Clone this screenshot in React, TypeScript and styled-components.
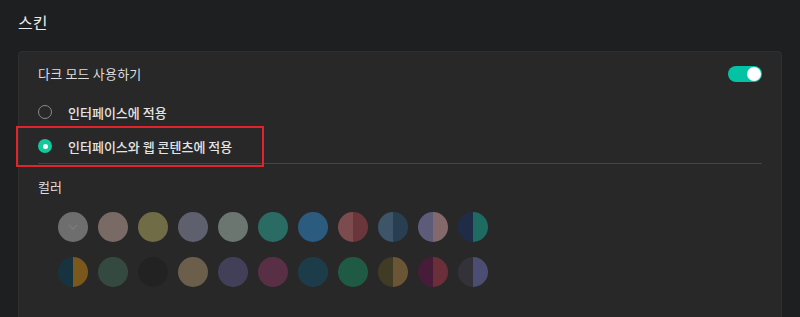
import React from 'react'
import styled, { createGlobalStyle } from 'styled-components'

const GlobalStyle = createGlobalStyle`
  html, body {
    margin: 0;
    padding: 0;
    background: #1e1f21;
  }
  body {
    font-family: 'Noto Sans CJK KR', 'Noto Sans', sans-serif;
    color: #e2e2e2;
  }
`

type Swatch = [string, string?]

const swatchRows: Swatch[][] = [
  [
    ['#6e6e6e'],
    ['#7a6a66'],
    ['#6f6c46'],
    ['#5e616d'],
    ['#6b7670'],
    ['#2a6c63'],
    ['#2c5b80'],
    ['#7b4b4e', '#6a363c'],
    ['#3e5469', '#283f52'],
    ['#5c5c7a', '#84696c'],
    ['#1f2c48', '#1e6b62'],
  ],
  [
    ['#183340', '#7a581c'],
    ['#344a41'],
    ['#222222'],
    ['#6b5f4c'],
    ['#423f58'],
    ['#582f44'],
    ['#1d3c4a'],
    ['#1e5a44'],
    ['#403b24', '#6a5535'],
    ['#461c38', '#6b2f3a'],
    ['#323238', '#4b4e72'],
  ],
]

const App: React.FC = () => {
  return (
    <>
      <GlobalStyle />
      <Page>
        <Title>스킨</Title>
        <Card>
          <SettingRow>
            <Label>다크 모드 사용하기</Label>
            <Toggle $on>
              <Knob />
            </Toggle>
          </SettingRow>
          <RadioRow>
            <Radio />
            <RadioLabel>인터페이스에 적용</RadioLabel>
          </RadioRow>
          <RadioRow>
            <Radio $checked />
            <RadioLabel>인터페이스와 웹 콘텐츠에 적용</RadioLabel>
            <Highlight />
          </RadioRow>
          <Divider />
          <SectionLabel>컬러</SectionLabel>
          <SwatchGrid>
            {swatchRows.flat().map(([a, b], i) => (
              <Dot key={i} $a={a} $b={b ?? a}>
                {i === 0 && (
                  <svg width="10" height="6" viewBox="0 0 10 6">
                    <path d="M1 1l4 4 4-4" fill="none" stroke="#7c7c7c" strokeWidth="1.3" />
                  </svg>
                )}
              </Dot>
            ))}
          </SwatchGrid>
        </Card>
      </Page>
    </>
  )
}

const Page = styled.div`
  padding: 11px 18px 0;
`

const Title = styled.div`
  font-size: 16px;
  line-height: 22px;
  color: #ececec;
  margin-bottom: 18px;
`

const Card = styled.div`
  background: #282828;
  border: 1px solid #2f2f2f;
  border-bottom: none;
  border-radius: 4px 4px 0 0;
  padding: 0 19px 40px;
`

const SettingRow = styled.div`
  height: 43px;
  display: flex;
  align-items: center;
  justify-content: space-between;
`

const Label = styled.div`
  font-size: 13px;
  letter-spacing: 0.2px;
  color: #dedede;
`

const Toggle = styled.div<{ $on?: boolean }>`
  width: 34px;
  height: 16px;
  border-radius: 8px;
  background: ${(p) => (p.$on ? '#04c3a4' : '#555')};
  display: flex;
  align-items: center;
  justify-content: ${(p) => (p.$on ? 'flex-end' : 'flex-start')};
  padding: 0 1px;
  box-sizing: border-box;
`

const Knob = styled.div`
  width: 14px;
  height: 14px;
  border-radius: 50%;
  background: #ffffff;
`

const RadioRow = styled.div`
  position: relative;
  height: 34px;
  display: flex;
  align-items: center;
  gap: 16px;
`

const Radio = styled.div<{ $checked?: boolean }>`
  width: 14px;
  height: 14px;
  border-radius: 50%;
  box-sizing: border-box;
  display: flex;
  align-items: center;
  justify-content: center;
  border: ${(p) => (p.$checked ? 'none' : '1.5px solid #8a8a8a')};
  background: ${(p) => (p.$checked ? '#12c99b' : 'transparent')};
  &::after {
    content: '';
    display: ${(p) => (p.$checked ? 'block' : 'none')};
    width: 5px;
    height: 5px;
    border-radius: 50%;
    background: #ffffff;
  }
`

const RadioLabel = styled.div`
  font-size: 13px;
  font-weight: 500;
  color: #e4e4e4;
`

const Highlight = styled.div`
  position: absolute;
  left: -22px;
  top: -3px;
  width: 248px;
  height: 41px;
  border: 2px solid #e1242b;
  box-sizing: border-box;
  pointer-events: none;
`

const Divider = styled.div`
  height: 1px;
  background: #444444;
`

const SectionLabel = styled.div`
  margin-top: 13px;
  font-size: 13px;
  line-height: 20px;
  color: #dedede;
`

const SwatchGrid = styled.div`
  margin: 15px 0 0 20px;
  display: grid;
  grid-template-columns: repeat(11, 30px);
  column-gap: 10px;
  row-gap: 15px;
`

const Dot = styled.div<{ $a: string; $b: string }>`
  width: 30px;
  height: 30px;
  border-radius: 50%;
  background: linear-gradient(90deg, ${(p) => p.$a} 50%, ${(p) => p.$b} 50%);
  display: flex;
  align-items: center;
  justify-content: center;
`

export default App
